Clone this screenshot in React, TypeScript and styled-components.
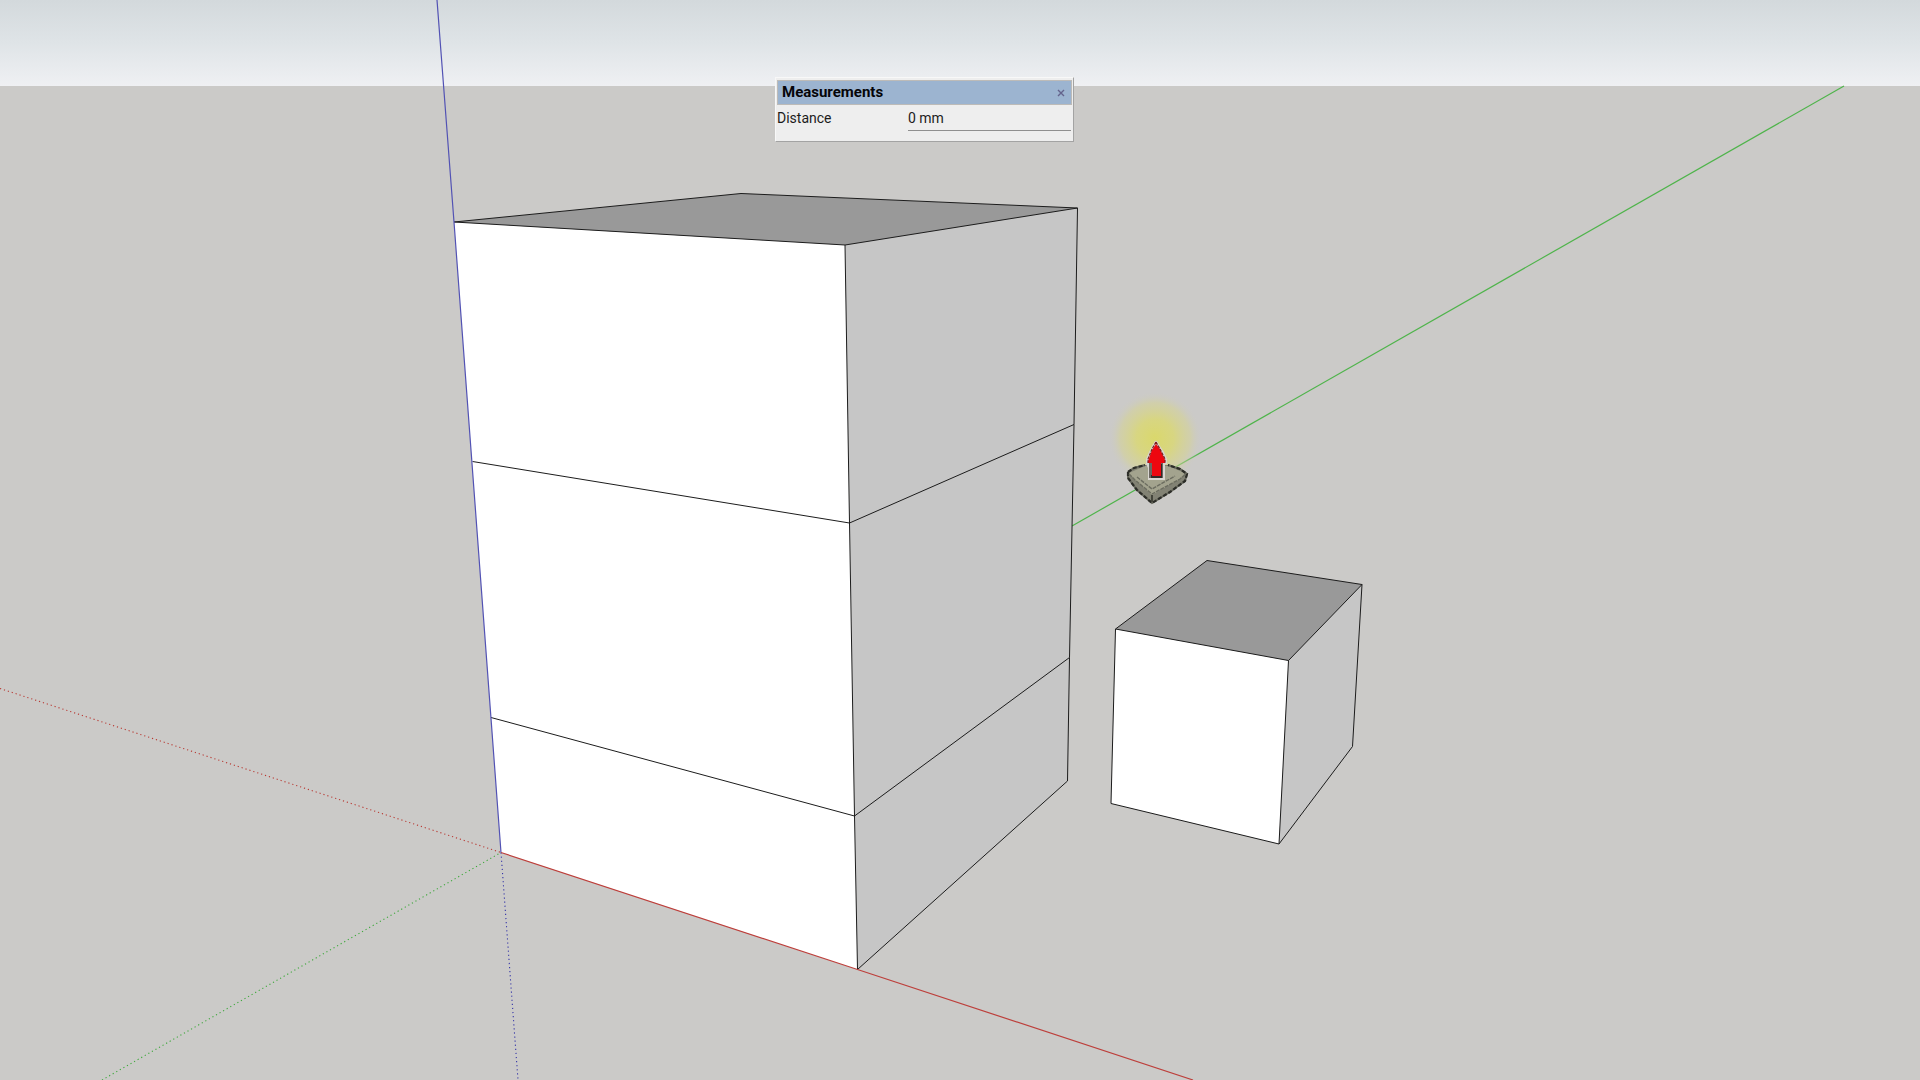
import React from "react";
import styled, { createGlobalStyle } from "styled-components";

const GlobalStyle = createGlobalStyle`
  *, *::before, *::after { box-sizing: border-box; }
  body { margin: 0; background: #cbcac8; overflow: hidden; }
`;

const Viewport = styled.main`
  position: relative;
  width: 100%;
  height: 100vh;
  overflow: hidden;
`;

const Scene = styled.svg`
  display: block;
  width: 100%;
  height: 100%;
`;

const Face = styled.polygon<{ $tone: string }>`
  fill: ${(p) => p.$tone};
`;

const Edge = styled.path`
  fill: none;
  stroke: #1c1c1c;
  stroke-width: 1;
  stroke-linejoin: round;
`;

const Axis = styled.path<{ $color: string; $negative?: boolean }>`
  fill: none;
  stroke: ${(p) => p.$color};
  stroke-width: ${(p) => (p.$negative ? 1.1 : 1.2)};
  stroke-dasharray: ${(p) => (p.$negative ? "1.2 2.9" : "none")};
`;

const Panel = styled.section`
  position: absolute;
  left: 775px;
  top: 77px;
  width: 299px;
  height: 65px;
  padding: 2px 1px 0;
  background: #eeeeee;
  border: 1px solid #f8f8f8;
  border-right-color: #a3a3a3;
  border-bottom-color: #a3a3a3;
  color: #1c1c1c;
  font-family: Roboto, "Liberation Sans", sans-serif;
`;

const TitleBar = styled.header`
  display: flex;
  align-items: center;
  justify-content: space-between;
  height: 25px;
  padding: 0 4px;
  background: #9cb4d0;
  border: 1px solid #bdbbb8;
`;

const Title = styled.h1`
  margin: 0;
  color: #050508;
  font-size: 15px;
  font-weight: 700;
  line-height: 23px;
`;

const CloseButton = styled.button`
  display: grid;
  place-items: center;
  width: 12px;
  height: 20px;
  padding: 0;
  border: 0;
  background: none;
  color: #64638c;
`;

const Field = styled.div`
  display: grid;
  grid-template-columns: 131px 1fr;
  align-items: start;
  padding-right: 1px;
`;

const FieldLabel = styled.label`
  font-size: 14px;
  line-height: 27px;
`;

const FieldInput = styled.input`
  width: 100%;
  height: 26px;
  padding: 1px 0 0;
  border: 0;
  border-bottom: 1px solid #8f8f8f;
  outline: 0;
  background: transparent;
  color: inherit;
  font-family: inherit;
  font-size: 14px;
  line-height: 24px;
`;

const PushPullCursor = () => (
  <g>
    <circle cx="1155" cy="438" r="47" fill="url(#glow)" />
    <path d="M1128 472V478L1137 490L1152 503L1170 492L1185 481L1187 473L1180 469L1168 465H1145L1134 469Z" fill="#828274" />
    <path d="M1129 473L1145 466H1168L1185 473L1180 479L1152 495L1135 480Z" fill="#a3a38e" />
    <path d="M1128 472V478L1137 490L1152 503L1170 492L1185 481L1187 474L1180 469L1168 465M1128 472L1134 468L1145 465" fill="none" stroke="#66675c" strokeWidth="2" />
    <path d="M1128 472V478L1137 490L1152 503L1170 492L1185 481L1187 474L1180 469L1168 465M1128 472L1134 468L1145 465" fill="none" stroke="#2c2d28" strokeWidth="2.2" strokeDasharray="4 2" />
    <path d="M1129 474L1135 480L1152 494L1180 479L1186 474M1137 477L1152 489L1175 476" fill="none" stroke="#6c6d60" strokeWidth="1.4" strokeDasharray="4 1" />
    <path d="M1152 495V502" stroke="#44453b" strokeWidth="2" />
    <path d="M1155 441H1157L1160 446L1164 452L1167 459V464H1165V480H1148V468L1146 464V459L1149 452L1152 446Z" fill="#d9d6d1" />
    <path d="M1149 463H1163V478H1149Z" fill="#6b6661" />
    <path d="M1160 464H1162V478H1151V475H1160Z" fill="#342a28" />
    <path d="M1156 444L1152 450L1148 461V463H1152V476H1161V463H1165V460L1160 449Z" fill="#ed0710" />
    <path d="M1156 442L1152 449L1148 459V463M1156 442L1160 449L1165 459V463" fill="none" stroke="#7b211e" strokeWidth="1.2" strokeDasharray="3 1" />
  </g>
);

export default function App() {
  return (
    <>
      <GlobalStyle />
      <Viewport>
        <Scene viewBox="0 0 1920 1080" preserveAspectRatio="xMidYMid slice" role="img" aria-label="3D model view">
          <defs>
            <linearGradient id="sky" x1="0" y1="0" x2="0" y2="1">
              <stop offset="0" stopColor="#d3d9dc" />
              <stop offset="0.5" stopColor="#dfe4e7" />
              <stop offset="1" stopColor="#eff0f3" />
            </linearGradient>
            <radialGradient id="glow">
              <stop offset="0" stopColor="#dad86c" />
              <stop offset="0.4" stopColor="#d9d77a" stopOpacity="0.9" />
              <stop offset="0.75" stopColor="#d5d394" stopOpacity="0.55" />
              <stop offset="1" stopColor="#cbcac8" stopOpacity="0" />
            </radialGradient>
          </defs>
          <rect width="1920" height="1080" fill="#cbcac8" />
          <rect width="1920" height="86" fill="url(#sky)" />

          <Axis $color="#b83a34" $negative d="M0 688.5L501 852.5" />
          <Axis $color="#3ea83c" $negative d="M102 1080L501 852.5" />
          <Axis $color="#3434a8" $negative d="M501 852.5L518 1080" />
          <Axis $color="#4fb44b" d="M1072 526L1844 86" />

          <Face $tone="#ffffff" points="454,222 845,245 857.5,969.5 501,852.5" />
          <Face $tone="#c6c6c6" points="845,245 1077.5,208 1067.5,781 857.5,969.5" />
          <Face $tone="#999999" points="454,222 741,193.5 1077.5,208 845,245" />
          <Edge d="M454 222L741 193.5L1077.5 208L845 245ZM845 245L849.5 523L854.5 816L857.5 969.5L1067.5 781L1069.5 657.5L1074 424.5L1077.5 208" />
          <Edge d="M472.5 461.5L849.5 523L1074 424.5M491 717.5L854.5 816L1069.5 657.5" />
          <Axis $color="#5252b4" d="M437 0L454 222L501 852.5" />
          <Axis $color="#bd3f3b" d="M501 852.5L857.5 969.5L1193 1080" />

          <Face $tone="#ffffff" points="1115.5,629 1288.5,660.5 1279,844 1111,803.5" />
          <Face $tone="#c6c6c6" points="1288.5,660.5 1362,584.5 1352.5,746.5 1279,844" />
          <Face $tone="#999999" points="1115.5,629 1207,560.5 1362,584.5 1288.5,660.5" />
          <Edge d="M1115.5 629L1207 560.5L1362 584.5L1288.5 660.5ZM1115.5 629L1111 803.5L1279 844L1352.5 746.5L1362 584.5M1288.5 660.5L1279 844" />

          <PushPullCursor />
        </Scene>

        <Panel aria-labelledby="measurements-title">
          <TitleBar>
            <Title id="measurements-title">Measurements</Title>
            <CloseButton type="button" aria-label="Close">
              <svg width="8" height="8" viewBox="0 0 8 8" aria-hidden="true">
                <path d="M1 1L7 7M7 1L1 7" stroke="currentColor" strokeWidth="1.4" />
              </svg>
            </CloseButton>
          </TitleBar>
          <Field>
            <FieldLabel htmlFor="distance">Distance</FieldLabel>
            <FieldInput id="distance" type="text" defaultValue="0 mm" />
          </Field>
        </Panel>
      </Viewport>
    </>
  );
}
